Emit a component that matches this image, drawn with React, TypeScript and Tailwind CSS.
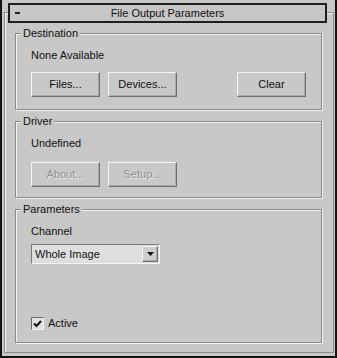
import React from "react";

const raised =
  "border border-t-[#f4f4f4] border-l-[#f4f4f4] border-b-[#6e6e6e] border-r-[#6e6e6e] shadow-[inset_-1px_-1px_0_#a8a8a8]";

function Btn({ label, disabled, className = "" }: { label: string; disabled?: boolean; className?: string }) {
  return (
    <div
      className={`h-[25px] w-[69px] ${raised} bg-[#c8c8c8] flex items-center justify-center leading-none ${
        disabled ? "text-[#8e8e8e] [text-shadow:1px_1px_0_#ececec]" : "text-[#111]"
      } ${className}`}
    >
      {label}
    </div>
  );
}

function Group({ title, h, className = "", children }: { title: string; h: string; className?: string; children: React.ReactNode }) {
  return (
    <div
      className={`relative ${h} ml-[10px] mr-[11px] border border-[#8a8a8a] shadow-[inset_1px_1px_0_#f2f2f2,1px_1px_0_#f2f2f2] ${className}`}
    >
      <div className="absolute -top-[7px] left-[5px] px-[2px] bg-[#c8c8c8] leading-[13px] text-[#111]">{title}</div>
      {children}
    </div>
  );
}

export default function App() {
  return (
    <div className="w-[337px] h-[358px] bg-[#c8c8c8] border-l-2 border-r-2 border-b-2 border-[#121212] font-['Liberation_Sans',Arial,sans-serif] text-[11px] text-[#111] overflow-hidden">
      <div className="mt-[12px] ml-[2px] mr-[1px] h-[341px] border border-[#8a8a8a] shadow-[inset_1px_1px_0_#f2f2f2]">
        <div className="-mt-[10px] ml-[3px] mr-[6px] h-[20px] border-2 border-[#1e1e1e] bg-[#c6c6c6] relative flex items-center justify-center">
          <span className="absolute left-[5px] top-[7px] w-[5px] h-[2px] bg-[#222]" />
          <span className="leading-none">File Output Parameters</span>
        </div>

        <Group title="Destination" h="h-[77px]" className="mt-[10px]">
          <div className="pt-[15px] pl-[15px] leading-[13px]">None Available</div>
          <div className="mt-[10px] pl-[15px] pr-[15px] flex">
            <Btn label="Files..." />
            <Btn label="Devices..." className="ml-[8px]" />
            <div className="flex-1" />
            <Btn label="Clear" />
          </div>
        </Group>

        <Group title="Driver" h="h-[77px]" className="mt-[11px]">
          <div className="pt-[15px] pl-[15px] leading-[13px]">Undefined</div>
          <div className="mt-[12px] pl-[15px] flex">
            <Btn label="About..." disabled />
            <Btn label="Setup..." disabled className="ml-[8px]" />
          </div>
        </Group>

        <Group title="Parameters" h="h-[134px]" className="mt-[11px]">
          <div className="pt-[15px] pl-[15px] leading-[13px]">Channel</div>
          <div className="mt-[6px] ml-[15px] w-[129px] h-[20px] border border-t-[#7a7a7a] border-l-[#7a7a7a] border-b-[#f4f4f4] border-r-[#f4f4f4] bg-[#dedede] flex items-center">
            <span className="pl-[3px] leading-none flex-1">Whole Image</span>
            <div className={`w-[16px] h-[16px] mr-[1px] ${raised} bg-[#cdcdcd] flex items-center justify-center`}>
              <svg width="7" height="4" viewBox="0 0 7 4">
                <path d="M0 0H7L3.5 4Z" fill="#111" />
              </svg>
            </div>
          </div>
          <div className="mt-[53px] ml-[15px] flex items-center">
            <div className="w-[13px] h-[13px] border border-t-[#6a6a6a] border-l-[#6a6a6a] border-b-[#f4f4f4] border-r-[#f4f4f4] bg-[#e2e2e2] flex items-center justify-center">
              <svg width="9" height="8" viewBox="0 0 9 8">
                <path d="M1 3.5L3.5 6L8 1" stroke="#111" strokeWidth="2" fill="none" />
              </svg>
            </div>
            <span className="ml-[4px] leading-none">Active</span>
          </div>
        </Group>
      </div>
    </div>
  );
}
